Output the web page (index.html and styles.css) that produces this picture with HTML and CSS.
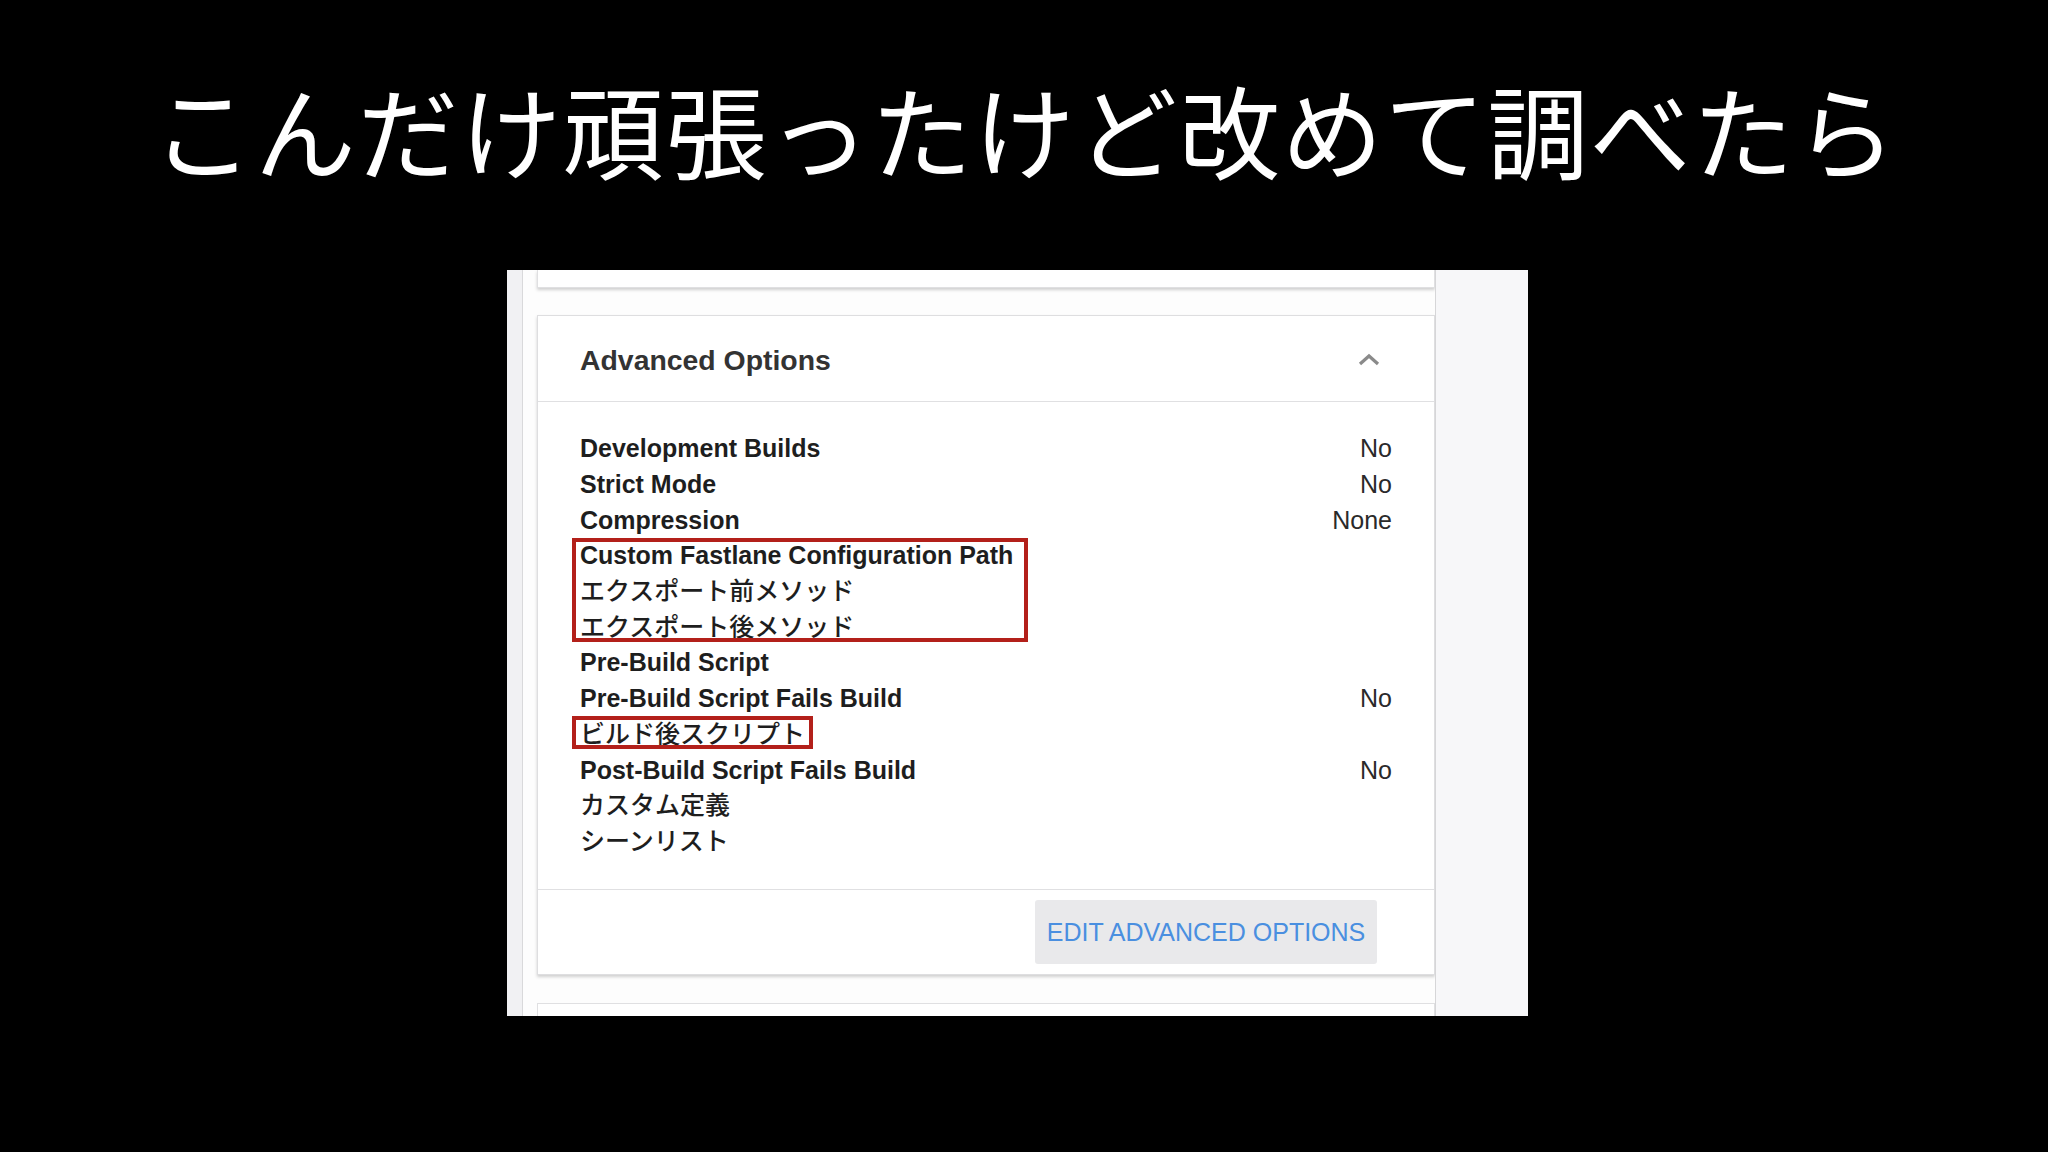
FILE: index.html
```html
<!DOCTYPE html>
<html lang="ja">
<head>
<meta charset="utf-8">
<title>Advanced Options</title>
<link rel="stylesheet" href="styles.css">
</head>
<body>
<h1 class="title">こんだけ頑張ったけど改めて調べたら</h1>
<div class="shot">
  <div class="rail"></div>
  <div class="gutter"></div>
  <div class="main">
    <div class="card-prev"></div>
    <section class="card">
      <header class="card-head">
        <h2>Advanced Options</h2>
        <svg class="chev" width="22" height="13" viewBox="0 0 22 13"><polyline points="2,11 11,3 20,11" fill="none" stroke="#8a8a8a" stroke-width="3.2"/></svg>
      </header>
      <div class="card-body">
        <div class="row"><span class="lbl">Development Builds</span><span class="val">No</span></div>
        <div class="row"><span class="lbl">Strict Mode</span><span class="val">No</span></div>
        <div class="row"><span class="lbl">Compression</span><span class="val">None</span></div>
        <div class="mark mark-a">
          <div class="row"><span class="lbl">Custom Fastlane Configuration Path</span></div>
          <div class="row"><span class="lbl jp">エクスポート前メソッド</span></div>
          <div class="row"><span class="lbl jp">エクスポート後メソッド</span></div>
        </div>
        <div class="row"><span class="lbl">Pre-Build Script</span></div>
        <div class="row"><span class="lbl">Pre-Build Script Fails Build</span><span class="val">No</span></div>
        <div class="mark mark-b">
          <div class="row"><span class="lbl jp">ビルド後スクリプト</span></div>
        </div>
        <div class="row"><span class="lbl">Post-Build Script Fails Build</span><span class="val">No</span></div>
        <div class="row"><span class="lbl jp">カスタム定義</span></div>
        <div class="row"><span class="lbl jp">シーンリスト</span></div>
      </div>
      <footer class="card-foot">
        <button class="btn">EDIT ADVANCED OPTIONS</button>
      </footer>
    </section>
    <div class="card-next"></div>
  </div>
  <div class="side"></div>
</div>
</body>
</html>
```
FILE: styles.css
```css
html, body {
  margin: 0;
  padding: 0;
  background: #000;
}
body {
  width: 2048px;
  height: 1152px;
  overflow: hidden;
  font-family: "Liberation Sans", "Noto Sans CJK JP", sans-serif;
}
.title {
  margin: 0;
  box-sizing: border-box;
  height: 270px;
  padding: 78px 0 0 2px;
  font-family: "Noto Sans CJK JP", sans-serif;
  font-weight: 400;
  font-size: 101px;
  line-height: 101px;
  color: #fff;
  text-align: center;
  letter-spacing: 1.7px;
}
.shot {
  margin-left: 507px;
  width: 1021px;
  height: 746px;
  display: flex;
  overflow: hidden;
  background: #f7f7f9;
}
.rail {
  width: 15px;
  background: #f1f1f3;
  border-right: 1px solid #d9d9db;
}
.gutter {
  width: 14px;
  background: #fdfdfd;
}
.main {
  width: 898px;
  background: #fdfdfd;
  display: flex;
  flex-direction: column;
}
.main > * {
  flex-shrink: 0;
}
.card-prev {
  height: 17px;
  background: #fff;
  border: 1px solid #e0e0e2;
  border-top: none;
  box-shadow: 0 2px 3px rgba(0,0,0,0.18);
}
.card {
  margin-top: 27px;
  background: #fff;
  border: 1px solid #dedee0;
  box-shadow: 0 2px 3px rgba(0,0,0,0.18);
  display: flex;
  flex-direction: column;
}
.card-head {
  box-sizing: border-box;
  height: 86px;
  padding: 3px 54px 0 42px;
  border-bottom: 1px solid #e0e0e2;
  display: flex;
  align-items: center;
  justify-content: space-between;
}
.card-head h2 {
  margin: 0;
  font-size: 28.4px;
  font-weight: 700;
  color: #333;
}
.chev {
  display: block;
  margin-top: -2px;
}
.card-body {
  padding: 29px 42px 30px 42px;
}
.row {
  height: 35.7px;
  display: flex;
  align-items: center;
  justify-content: space-between;
  font-size: 25px;
  color: #1e1e1e;
}
.lbl {
  font-weight: 700;
}
.lbl.jp {
  font-weight: 500;
  font-size: 25px;
  padding-bottom: 5px;
}
.val {
  color: #2a2a2a;
  font-weight: 400;
}
.mark {
  position: relative;
}
.mark::after {
  content: "";
  position: absolute;
  box-sizing: border-box;
  border: 4px solid #b3201a;
  pointer-events: none;
}
.mark-a::after {
  left: -8px;
  top: 0;
  width: 456px;
  height: 104px;
}
.mark-b::after {
  left: -8px;
  top: -1px;
  width: 241px;
  height: 33px;
}
.card-foot {
  height: 84px;
  border-top: 1px solid #e0e0e2;
  display: flex;
  align-items: center;
  justify-content: flex-end;
  padding-right: 57px;
}
.btn {
  width: 342px;
  height: 64px;
  border: none;
  border-radius: 3px;
  background: #e9e9eb;
  color: #4a8fe0;
  font-family: "Liberation Sans", sans-serif;
  font-size: 25px;
  padding: 0;
}
.card-next {
  margin-top: 28px;
  height: 40px;
  background: #fff;
  border: 1px solid #e0e0e2;
}
.side {
  flex: 1;
  background: #f7f7f9;
  border-left: 1px solid #d6d6d8;
}
```
